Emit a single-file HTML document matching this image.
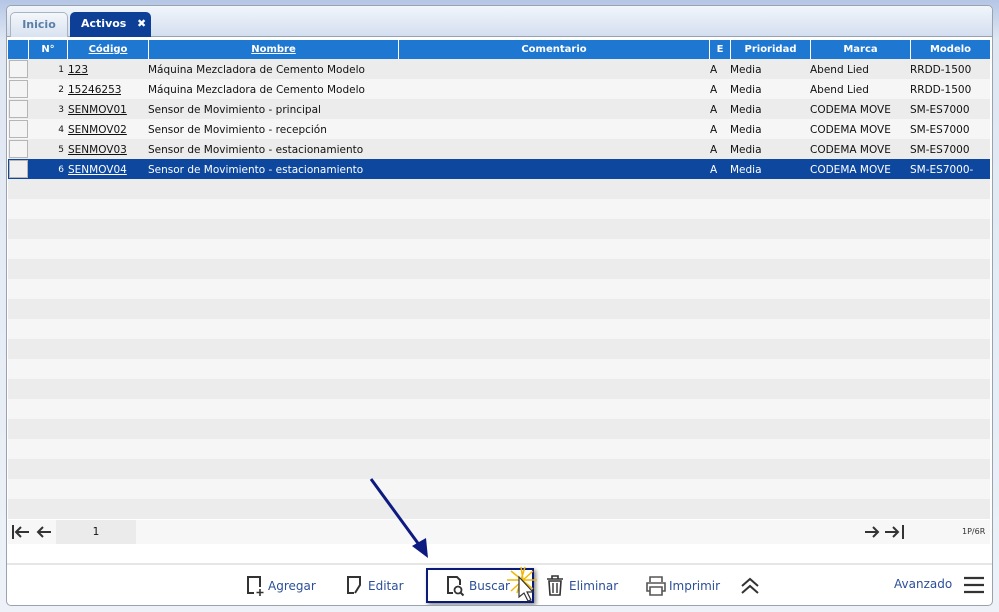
<!DOCTYPE html>
<html><head><meta charset="utf-8"><style>
*{margin:0;padding:0;box-sizing:border-box}
body{width:999px;height:612px;overflow:hidden;background:linear-gradient(#b4c6e6,#dfe7f3 40px,#eef2f8);font-family:"DejaVu Sans","Liberation Sans",sans-serif;font-size:10.5px;color:#111;position:relative}
.panel{position:absolute;left:6px;top:5px;width:987px;height:601px;background:#fff;border:1px solid #9aa3ad;border-radius:5px;overflow:hidden}
.tabs{position:absolute;left:0;top:0;width:100%;height:31px;background:linear-gradient(#f2f6fb,#d3def0);border-bottom:1px solid #9aa3ad;border-radius:5px 5px 0 0}
.tab{position:absolute;top:6px;height:25px;border-radius:5px 5px 0 0;font-weight:bold;font-size:11px;padding-top:5px}
.t1{left:3px;width:58px;background:linear-gradient(#f4f7fb,#d8e2f0);border:1px solid #aab3be;border-bottom:none;color:#5a7fa8;text-align:center}
.t2{left:63px;width:81px;background:#0d3f96;color:#fff;padding-left:11px}
.grid{position:absolute;left:1px;top:34px;width:982px}
.row{position:absolute;left:0;width:982px;height:20px;line-height:22px;white-space:nowrap}
.c{position:absolute;top:0;height:20px;overflow:hidden}
.hdr{background:#1e78d2;color:#fff;font-weight:bold;height:19px;line-height:20px;font-size:10px;top:0!important}
.hdr .c{border-left:1px solid #fff;text-align:center;height:19px}
.cb{position:absolute;left:1px;top:1px;width:19px;height:18px;background:#f4f4f4;border:1px solid #b5b5b5}
.sel{background:#0e489e;color:#fff}
.sel .cb{background:#f0f0f0}
u{text-decoration:underline}
.pager{position:absolute;left:1px;top:514px;width:982px;height:24px;background:#f7f7f7}
.tb{position:absolute;left:0;top:557px;width:100%;height:44px;border-top:2px solid #e6e6e6;color:#2c4f99;font-size:12px}
.tb span{position:absolute;top:14px}
svg{position:absolute}
</style></head><body>
<div class="panel">
<div class="tabs"><div class="tab t1">Inicio</div><div class="tab t2">Activos<span style="position:absolute;left:67px;top:5px">✖</span></div></div>
<div class="grid" id="g">
<div class="row hdr" style="top:0">
<div class="c" style="left:20px;width:39px">N°</div>
<div class="c" style="left:59px;width:81px"><u>Código</u></div>
<div class="c" style="left:140px;width:250px"><u>Nombre</u></div>
<div class="c" style="left:390px;width:311px">Comentario</div>
<div class="c" style="left:701px;width:21px">E</div>
<div class="c" style="left:722px;width:80px">Prioridad</div>
<div class="c" style="left:802px;width:100px">Marca</div>
<div class="c" style="left:902px;width:80px">Modelo</div>
</div>
</div>
<div class="pager">
<svg style="left:3px;top:4px" width="44" height="16" viewBox="0 0 44 16"><g stroke="#333" stroke-width="2" fill="none"><path d="M2 1v14M18 8H5M10 3L5 8l5 5M40 8H27M32 3l-5 5 5 5"/></g></svg>
<div style="position:absolute;left:48px;top:0;width:80px;height:24px;background:#ebebeb;text-align:center;line-height:24px">1</div>
<svg style="left:855px;top:4px" width="44" height="16" viewBox="0 0 44 16"><g stroke="#333" stroke-width="2" fill="none"><path d="M2 8h13M10 3l5 5-5 5M22 8h13M30 3l5 5-5 5M40 1v14"/></g></svg>
<div style="position:absolute;left:954px;top:7px;font-size:8px;color:#333">1P/6R</div>
</div>
<div class="tb">
<svg style="left:238px;top:10px" width="20" height="22"><path d="M12 2H3v16h6M12 2h3v10" stroke="#333" stroke-width="2" fill="none"/><path d="M15 14v7M11.5 17.5h7" stroke="#333" stroke-width="1.6"/></svg>
<span style="left:261px">Agregar</span>
<svg style="left:338px;top:10px" width="20" height="22"><path d="M12 2H3v16h6M12 2h3v8l-5 8" stroke="#333" stroke-width="2" fill="none"/></svg>
<span style="left:361px">Editar</span>
<div style="position:absolute;left:419px;top:3px;width:108px;height:35px;border:2px solid #0b1a78;box-shadow:2px 2px 4px #888"></div>
<svg style="left:438px;top:10px" width="22" height="22"><path d="M8 18H3V2h9l3 3v5" stroke="#333" stroke-width="2" fill="none"/><circle cx="13" cy="15" r="3.5" stroke="#333" stroke-width="1.8" fill="none"/><path d="M15.5 17.5l3 3" stroke="#333" stroke-width="2"/></svg>
<span style="left:462px">Buscar</span>
<svg style="left:498px;top:0px" width="34" height="40"><g stroke="#f0b800" stroke-width="1.5"><path d="M16 2l4 26M6 6l22 18M2 15h30M6 26L28 6M12 28l8-26"/></g><path d="M14 12v20l5-4 4 8 3-1-4-8h6z" fill="#fff" stroke="#333" stroke-width="1.2"/></svg>
<svg style="left:538px;top:10px" width="20" height="22"><path d="M2 4h16M7 4V1h6v3M4 6h12l-1 14H5z" stroke="#333" stroke-width="1.6" fill="none"/><path d="M8 8v10M12 8v10" stroke="#333" stroke-width="1.4"/></svg>
<span style="left:562px">Eliminar</span>
<svg style="left:638px;top:10px" width="22" height="22"><path d="M5 7V2h12v5M5 16H2V8h18v8h-3M5 12h12v8H5z" stroke="#555" stroke-width="1.6" fill="none"/></svg>
<span style="left:662px">Imprimir</span>
<svg style="left:732px;top:12px" width="22" height="18"><path d="M3 9l8-7 8 7M3 16l8-7 8 7" stroke="#333" stroke-width="2" fill="none"/></svg>
<span style="left:887px;top:12px">Avanzado</span>
<svg style="left:956px;top:10px" width="22" height="20"><path d="M1 3h20M1 10h20M1 17h20" stroke="#333" stroke-width="2.2"/></svg>
</div>
</div>
<svg style="left:360px;top:470px" width="80" height="95"><path d="M11 9L60 76" stroke="#0d1a80" stroke-width="3"/><path d="M68 88L52 76l14-8z" fill="#0d1a80"/></svg>
<script>
var d=[["1","123","Máquina Mezcladora de Cemento Modelo","Abend Lied","RRDD-1500"],["2","15246253","Máquina Mezcladora de Cemento Modelo","Abend Lied","RRDD-1500"],["3","SENMOV01","Sensor de Movimiento - principal","CODEMA MOVE","SM-ES7000"],["4","SENMOV02","Sensor de Movimiento - recepción","CODEMA MOVE","SM-ES7000"],["5","SENMOV03","Sensor de Movimiento - estacionamiento","CODEMA MOVE","SM-ES7000"],["6","SENMOV04","Sensor de Movimiento - estacionamiento","CODEMA MOVE","SM-ES7000-"]];
var g=document.getElementById('g'),h='';
for(var i=0;i<23;i++){var y=19+i*20,cls='row',bg=i%2?'#f6f6f6':'#ececec';
if(i==5){cls+=' sel';bg='#0e489e'}
h+='<div class="'+cls+'" style="top:'+y+'px;background:'+bg+'">';
if(i<6){var r=d[i];h+='<div class="cb"></div><div class="c" style="left:20px;width:36px;text-align:right;font-size:9px">'+r[0]+'</div><div class="c" style="left:60px"><u>'+r[1]+'</u></div><div class="c" style="left:140px">'+r[2]+'</div><div class="c" style="left:702px">A</div><div class="c" style="left:722px">Media</div><div class="c" style="left:802px">'+r[3]+'</div><div class="c" style="left:902px">'+r[4]+'</div>';}
h+='</div>';}
g.innerHTML+=h;
</script>
</body></html>
